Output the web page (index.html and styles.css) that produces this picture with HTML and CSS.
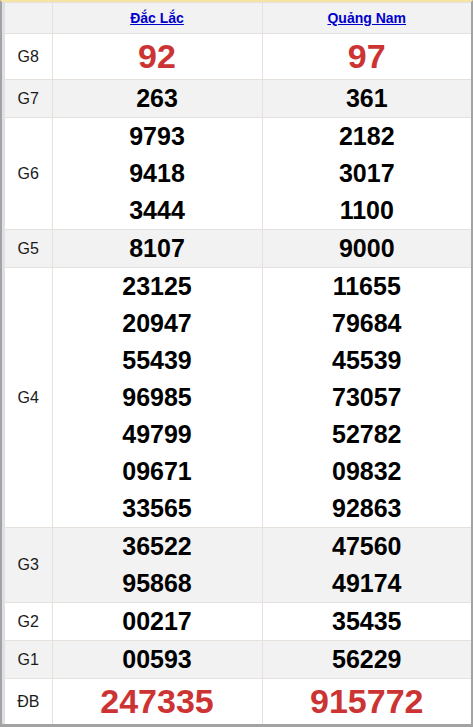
FILE: index.html
```html
<!DOCTYPE html>
<html>
<head>
<meta charset="utf-8">
<link rel="stylesheet" href="styles.css">
</head>
<body>
<div class="frame">
<table class="kq">
<colgroup><col class="c0"><col class="c1"><col class="c2"></colgroup>
<thead>
<tr class="hd"><th></th><th><a href="#">Đắc Lắc</a></th><th><a href="#">Quảng Nam</a></th></tr>
</thead>
<tbody>
<tr class="big"><td class="lb">G8</td><td class="red">92</td><td class="red">97</td></tr>
<tr class="alt"><td class="lb">G7</td><td><div>263</div></td><td><div>361</div></td></tr>
<tr><td class="lb">G6</td><td><div>9793</div><div>9418</div><div>3444</div></td><td><div>2182</div><div>3017</div><div>1100</div></td></tr>
<tr class="alt"><td class="lb">G5</td><td><div>8107</div></td><td><div>9000</div></td></tr>
<tr><td class="lb">G4</td><td><div>23125</div><div>20947</div><div>55439</div><div>96985</div><div>49799</div><div>09671</div><div>33565</div></td><td><div>11655</div><div>79684</div><div>45539</div><div>73057</div><div>52782</div><div>09832</div><div>92863</div></td></tr>
<tr class="alt"><td class="lb">G3</td><td><div>36522</div><div>95868</div></td><td><div>47560</div><div>49174</div></td></tr>
<tr><td class="lb">G2</td><td><div>00217</div></td><td><div>35435</div></td></tr>
<tr class="alt"><td class="lb">G1</td><td><div>00593</div></td><td><div>56229</div></td></tr>
<tr class="big"><td class="lb">ĐB</td><td class="red">247335</td><td class="red">915772</td></tr>
</tbody>
</table>
</div>
</body>
</html>
```
FILE: styles.css
```css
html, body { margin: 0; padding: 0; background: #fff; }
.frame {
  width: 473px; height: 727px; box-sizing: border-box;
  border-left: 2px solid #a3a3a3; border-right: 2px solid #a3a3a3; border-bottom: 3px solid #a3a3a3;
  border-top: 2px solid #f5e4a4;
  padding-left: 3px;
  background: linear-gradient(to right, #dde0e7 0, #dde0e7 3px, #fff 3px);
  font-family: "Liberation Sans", Arial, sans-serif;
  overflow: hidden;
}
.kq { border-collapse: collapse; width: 466px; table-layout: fixed; }
.c0 { width: 47px; }
.c1 { width: 210px; }
.c2 { width: 209px; }
.kq th, .kq td { border: 1px solid #e6e1dc; padding: 0; text-align: center; vertical-align: middle; }
.kq tr > :first-child { border-left: none; }
.kq tr > :last-child { border-right: none; }
.hd th { background: #f2f2f2; height: 30px; border-top: 1px solid #e6e1dc; }
.hd a { color: #0000cc; font-size: 14px; font-weight: bold; text-decoration: underline; }
.alt td { background: #f2f2f2; }
.lb { font-size: 16px; color: #1a1a1a; }
.kq td div { font-size: 25px; font-weight: bold; color: #000; height: 37px; line-height: 37px; }
.big td { height: 45px; }
.red { color: #cc3333; font-size: 34px; font-weight: bold; }
.big td.lb { font-size: 16px; }
```
